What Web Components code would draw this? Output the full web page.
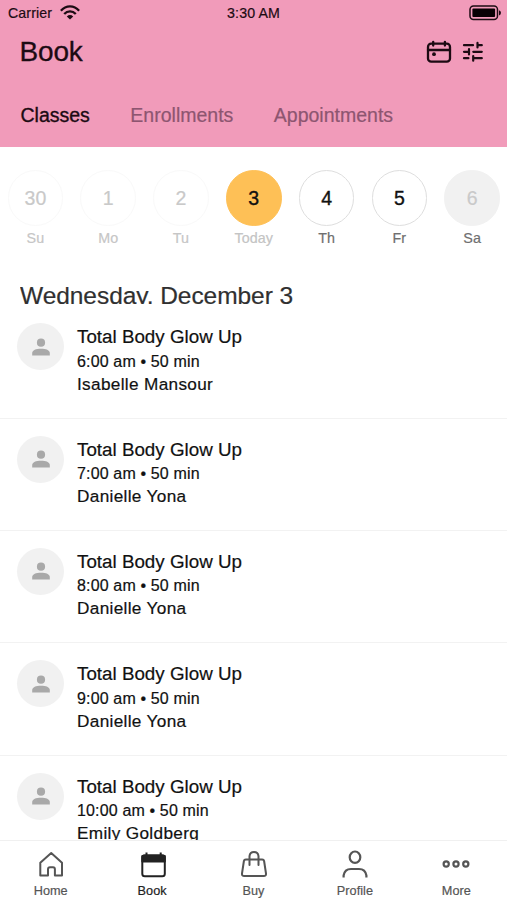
<!DOCTYPE html>
<html lang="en">
<head>
<meta charset="utf-8">
<title>Book</title>
<style>
html,body{margin:0;height:100%;background:#fff}
body{font-family:"Liberation Sans",Arial,sans-serif;color:#111;overflow:hidden;-webkit-text-stroke:.2px}
</style>
</head>
<body>
<booking-app></booking-app>
<script>
const define = (name, html) => customElements.define(name, class extends HTMLElement {
  constructor() {
    super();
    this.attachShadow({ mode: 'open' }).innerHTML = html;
  }
});

define('status-bar', `
<style>
:host{display:grid;grid-template-columns:1fr auto 1fr;align-items:center;height:25px;padding:0 6px 0 8px;font-size:14.200px;line-height:16px;letter-spacing:.1px;color:#1c0b13;box-sizing:border-box}
.l{display:flex;align-items:center;gap:8px}
.c{margin-left:-2px}
.r{justify-self:end;display:block}
svg{display:block}
</style>
<div class="l"><span>Carrier</span>
<svg width="20" height="16" viewBox="0 0 20 16" fill="none" stroke="#1c0b13" stroke-width="2.300"><path d="M.9 5.700C6-.1 14 -.1 19.100 5.700M4.200 9C7.500 5.500 12.500 5.500 15.800 9"/><path d="M10 14.600L6.800 11.400Q10 8.800 13.200 11.400Z" fill="#1c0b13" stroke="none"/></svg></div>
<span class="c">3:30 AM</span>
<svg class="r" width="32" height="16" viewBox="0 0 32 16"><rect x="1" y="1" width="27.500" height="13.500" rx="3.500" fill="none" stroke="#1c0b13" stroke-width="1.500"/><rect x="3.400" y="3.400" width="22.700" height="8.700" rx="1" fill="#080105"/><path d="M30 5.200Q32 5.700 32 7.800T30 10.400Z" fill="#1c0b13"/></svg>`);

define('title-bar', `
<style>
:host{display:flex;justify-content:space-between;align-items:center;height:54px;padding:0 24px 0 19.500px;box-sizing:border-box;color:#1c0b13}
h1{margin:0;font-weight:400;font-size:28px;line-height:32px;letter-spacing:-.15px;-webkit-text-stroke:.3px}
div{display:flex;gap:11px;align-items:center}
svg{display:block;overflow:visible}
</style>
<h1>Book</h1>
<div>
<svg width="26" height="24" viewBox="0 0 26 24" fill="none" stroke="#1c0b13" stroke-width="2.300" stroke-linecap="round"><rect x="2" y="3.700" width="22" height="18" rx="3.200"/><path d="M2 10H24M7.200 1.800V5.600M18.900 1.800V5.600"/><circle cx="8" cy="14.200" r="1.900" fill="#1c0b13" stroke="none"/></svg>
<svg width="20" height="20" viewBox="0 0 20 20" fill="none" stroke="#1c0b13" stroke-width="2.200" stroke-linecap="round"><path d="M1 3.200H10M14.500 .9V5.500M14.500 3.200H18.800M1 9.800H6M6 7.200V12.400M10.300 9.800H18.800M1 16.200H5.400M10.200 14V18.700M10.200 16.200H18.800"/></svg>
</div>`);

define('section-tabs', `
<style>
:host{display:flex;gap:40.500px;align-items:center;height:68px;padding:4px 0 0 20.500px;box-sizing:border-box;font-size:19.500px;line-height:22px}
::slotted(span){color:#8d5570}
::slotted(span.on){color:#1c0b13;-webkit-text-stroke:.35px}
</style><slot></slot>`);

customElements.define('day-cell', class extends HTMLElement {
  connectedCallback() {
    this.attachShadow({ mode: 'open' }).innerHTML = `
<style>
:host{display:flex;flex-direction:column;align-items:center;color:#111;--label:#6f6f6f;--ring:#dedede;--fill:#fff}
:host([kind=past]){color:#c9c9c9;--label:#c6c6c6;--ring:#f9f9f9}
:host([kind=today]){--label:#c4c4c4;--ring:#fec056;--fill:#fec056}
:host([kind=off]){color:#c9c9c9;--ring:#f1f1f1;--fill:#f1f1f1}
b{display:grid;place-items:center;width:55.500px;height:55.500px;box-sizing:border-box;border:1px solid var(--ring);background:var(--fill);border-radius:50%;font-weight:400;font-size:19.500px;line-height:22px}
:host([kind=today]) b,:host([kind=open]) b{-webkit-text-stroke:.35px}
small{font-size:14.300px;line-height:16px;letter-spacing:.1px;margin-top:4.500px;color:var(--label)}
</style><b>${this.getAttribute('date')}</b><small>${this.getAttribute('label')}</small>`;
  }
});

define('week-strip', `
<style>
:host{display:grid;grid-template-columns:repeat(7,72.800px);margin-left:-1px;padding-top:23px;height:87px}
</style><slot></slot>`);

define('day-heading', `
<style>
:host{display:block;margin:26px 0 1px 20px;height:21px;overflow:hidden;font-size:24.500px;line-height:26px;letter-spacing:-.05px;color:#303030}
</style><slot></slot>`);

customElements.define('class-row', class extends HTMLElement {
  connectedCallback() {
    this.attachShadow({ mode: 'open' }).innerHTML = `
<style>
:host{display:flex;gap:13px;height:112.450px;box-sizing:border-box;padding:17px 0 0 17px;border-bottom:1px solid #f2f2f2}
:host(:first-of-type){height:113.500px;padding-top:18px}
.a{flex:none;width:47px;height:47px;border-radius:50%;background:#f1f1f1;display:grid;place-items:center}
.t{padding-top:3px;white-space:nowrap;color:#111}
h2,p{margin:0;font-weight:400}
h2{font-size:18.800px;line-height:22px}
.time{font-size:16px;line-height:18px;letter-spacing:.15px;margin-top:4.500px}
.who{font-size:17.200px;line-height:20px;letter-spacing:.33px;margin-top:3px}
</style>
<div class="a"><svg width="18" height="18" viewBox="0 0 18 18" fill="#a9a9a9"><circle cx="9" cy="4.700" r="4.100"/><path d="M.2 17.500V15C.2 12.300 4 10.800 9 10.800S17.800 12.300 17.800 15V17.500Z"/></svg></div>
<div class="t"><h2>Total Body Glow Up</h2><p class="time">${this.getAttribute('time')} • 50 min</p><p class="who">${this.getAttribute('teacher')}</p></div>`;
  }
});

define('tab-item', `
<style>
:host{flex:1;display:flex;flex-direction:column;align-items:center;font-size:12.700px;line-height:15px;letter-spacing:.05px;color:#555}
:host([on]){color:#222}
.i{height:28px;margin:10px 0 5px}
</style><div class="i"><slot name="icon"></slot></div><slot></slot>`);

define('tab-bar', `
<style>
:host{display:flex;height:60px;box-sizing:border-box;border-top:1px solid #f0f0f0;background:#fff}
svg{display:block;overflow:visible;fill:none;stroke:#555;stroke-width:2;stroke-linejoin:round}
</style>
<tab-item><svg slot="icon" width="28" height="28" viewBox="0 0 28 28"><path d="M3.300 11.800L14.200 2L25 11.800V24.400H17.900V18.300Q17.900 16.200 16 16.200H13Q11 16.200 11 18.300V24.400H3.300Z"/></svg>Home</tab-item>
<tab-item on><svg slot="icon" width="28" height="28" viewBox="0 0 28 28" style="stroke:#222"><rect x="4.300" y="4.200" width="22.500" height="21" rx="2.500"/><path d="M4.300 5H26.800V10.400H4.300ZM8.500 1.500V5M22.700 1.500V5" fill="#222"/></svg>Book</tab-item>
<tab-item><svg slot="icon" width="28" height="28" viewBox="0 0 28 28"><path d="M5.800 8.500H22.200Q23.800 8.500 24.100 10L26 22.500Q26.200 25.100 23.800 25.100H4.200Q1.800 25.100 2 22.500L3.900 10Q4.200 8.500 5.800 8.500ZM9.500 14V5.200Q10 1 14 1T18.500 5.200V14" stroke-linecap="round"/></svg>Buy</tab-item>
<tab-item><svg slot="icon" width="28" height="28" viewBox="0 0 28 28" style="stroke-width:2.200"><ellipse cx="14" cy="6.200" rx="5.300" ry="5.700"/><path d="M2.600 26.500V24.500Q3.600 18 10 18H18Q24.400 18 25.400 24.500V26.500"/></svg>Profile</tab-item>
<tab-item><svg slot="icon" width="28" height="28" viewBox="0 0 28 28" style="stroke-width:2.200"><circle cx="4.200" cy="13" r="2.600"/><circle cx="14" cy="13" r="2.600"/><circle cx="23.800" cy="13" r="2.600"/></svg>More</tab-item>`);

define('booking-app', `
<style>
:host{display:flex;flex-direction:column;height:900px;overflow:hidden}
header{background:#f19bba;flex:none}
main{flex:1;min-height:0;overflow:hidden}
tab-bar{flex:none}
</style>
<header><status-bar></status-bar><title-bar></title-bar>
<section-tabs><span class="on">Classes</span><span>Enrollments</span><span>Appointments</span></section-tabs></header>
<main>
<week-strip>
<day-cell kind="past" date="30" label="Su"></day-cell>
<day-cell kind="past" date="1" label="Mo"></day-cell>
<day-cell kind="past" date="2" label="Tu"></day-cell>
<day-cell kind="today" date="3" label="Today"></day-cell>
<day-cell kind="open" date="4" label="Th"></day-cell>
<day-cell kind="open" date="5" label="Fr"></day-cell>
<day-cell kind="off" date="6" label="Sa"></day-cell>
</week-strip>
<day-heading>Wednesday, December 3</day-heading>
<class-row time="6:00 am" teacher="Isabelle Mansour"></class-row>
<class-row time="7:00 am" teacher="Danielle Yona"></class-row>
<class-row time="8:00 am" teacher="Danielle Yona"></class-row>
<class-row time="9:00 am" teacher="Danielle Yona"></class-row>
<class-row time="10:00 am" teacher="Emily Goldberg"></class-row>
</main>
<tab-bar></tab-bar>`);
</script>
</body>
</html>
